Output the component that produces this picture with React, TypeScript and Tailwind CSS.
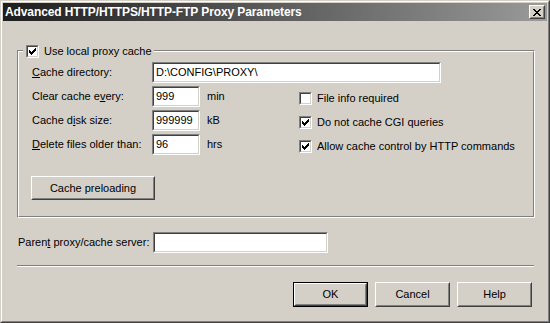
import React from 'react'

const font = "font-['Liberation_Sans',Arial,sans-serif]"

function CheckGlyph() {
  return (
    <svg width="7" height="7" viewBox="0 0 7 7" shapeRendering="crispEdges" className="block">
      <path
        d="M6 0h1v1h-1z M5 1h2v1h-2z M0 2h1v1h-1z M4 2h3v1h-3z M0 3h2v1h-2z M3 3h3v1h-3z M0 4h5v1h-5z M1 5h3v1h-3z M2 6h1v1h-1z"
        fill="#000"
      />
    </svg>
  )
}

function CheckBox({ checked }: { checked: boolean }) {
  return (
    <div className="w-[13px] h-[13px] shrink-0 border border-t-[#808080] border-l-[#808080] border-r-white border-b-white">
      <div className="w-full h-full border border-t-[#404040] border-l-[#404040] border-r-[#d4d0c8] border-b-[#d4d0c8] bg-white flex items-center justify-center">
        {checked && <CheckGlyph />}
      </div>
    </div>
  )
}

function TextBox({ value, className }: { value?: string; className: string }) {
  return (
    <div className={`h-[21px] shrink-0 border border-t-[#808080] border-l-[#808080] border-r-white border-b-white ${className}`}>
      <div className="w-full h-full border border-t-[#404040] border-l-[#404040] border-r-[#d4d0c8] border-b-[#d4d0c8] bg-white flex items-center pl-[2px] leading-none">
        {value}
      </div>
    </div>
  )
}

function Button({ label, isDefault }: { label: string; isDefault?: boolean }) {
  const inner = (
    <div className="w-full h-full border border-t-white border-l-white border-r-[#404040] border-b-[#404040]">
      <div className="w-full h-full border border-t-[#d4d0c8] border-l-[#d4d0c8] border-r-[#808080] border-b-[#808080] flex items-center justify-center">
        {label}
      </div>
    </div>
  )
  if (isDefault) {
    return <div className="w-[75px] h-[25px] border border-black">{inner}</div>
  }
  return <div className="w-[75px] h-[25px]">{inner}</div>
}

function CheckRow({ checked, label }: { checked: boolean; label: string }) {
  return (
    <div className="flex items-center gap-[5px] h-[13px]">
      <CheckBox checked={checked} />
      <span className="leading-none">{label}</span>
    </div>
  )
}

export default function App() {
  return (
    <div className={`w-[550px] h-[323px] bg-[#d4d0c8] border border-t-[#d4d0c8] border-l-[#d4d0c8] border-r-[#404040] border-b-[#404040] text-[11px] text-black ${font}`}>
      <div className="w-full h-full border border-t-white border-l-white border-r-[#808080] border-b-[#808080] p-[1px] flex flex-col">
        {/* Title bar */}
        <div className="h-[18px] shrink-0 flex items-center bg-gradient-to-r from-[#1e1e1e] via-[#5c5c5c] to-[#9a9a9a] pl-[2px] pr-[2px]">
          <span className="text-white font-bold text-[12px] leading-none tracking-[-0.1px]">
            Advanced HTTP/HTTPS/HTTP-FTP Proxy Parameters
          </span>
          <div className="ml-auto w-[16px] h-[14px] border border-t-white border-l-white border-r-[#404040] border-b-[#404040] bg-[#d4d0c8]">
            <div className="w-full h-full border border-t-[#d4d0c8] border-l-[#d4d0c8] border-r-[#808080] border-b-[#808080] flex items-center justify-center">
              <svg width="8" height="7" viewBox="0 0 8 7" shapeRendering="crispEdges" className="block">
                <path
                  d="M0 0h2v1h-2z M6 0h2v1h-2z M1 1h2v1h-2z M5 1h2v1h-2z M2 2h4v1h-4z M3 3h2v1h-2z M2 4h4v1h-4z M1 5h2v1h-2z M5 5h2v1h-2z M0 6h2v1h-2z M6 6h2v1h-2z"
                  fill="#000"
                />
              </svg>
            </div>
          </div>
        </div>

        {/* Group box */}
        <div className="relative ml-[14px] mt-[29px] w-[518px] h-[168px] border border-t-[#808080] border-l-[#808080] border-r-white border-b-white">
          <div className="absolute left-[5px] top-[-6px] flex items-center gap-[5px] bg-[#d4d0c8] pl-[3px] pr-[2px] h-[13px]">
            <CheckBox checked />
            <span className="leading-none">Use local proxy cache</span>
          </div>
          <div className="w-full h-full border border-t-white border-l-white border-r-[#808080] border-b-[#808080] pt-[10px] pl-[12px]">
            <div className="flex items-center h-[21px]">
              <span className="w-[121px] pl-[1px]"><u>C</u>ache directory:</span>
              <TextBox value="D:\CONFIG\PROXY\" className="w-[289px]" />
            </div>
            <div className="flex mt-[3px]">
              <div className="flex flex-col gap-[3px] w-[268px]">
                <div className="flex items-center h-[21px]">
                  <span className="w-[121px] pl-[1px]">Clear cache e<u>v</u>ery:</span>
                  <TextBox value="999" className="w-[48px]" />
                  <span className="ml-[7px]">min</span>
                </div>
                <div className="flex items-center h-[21px]">
                  <span className="w-[121px] pl-[1px]">Cache d<u>i</u>sk size:</span>
                  <TextBox value="999999" className="w-[48px]" />
                  <span className="ml-[7px]">kB</span>
                </div>
                <div className="flex items-center h-[21px]">
                  <span className="w-[121px] pl-[1px]"><u>D</u>elete files older than:</span>
                  <TextBox value="96" className="w-[48px]" />
                  <span className="ml-[7px]">hrs</span>
                </div>
              </div>
              <div className="flex flex-col gap-[11px] pt-[6px]">
                <CheckRow checked={false} label="File info required" />
                <CheckRow checked label="Do not cache CGI queries" />
                <CheckRow checked label="Allow cache control by HTTP commands" />
              </div>
            </div>
            <div className="mt-[21px] w-[124px] h-[24px]">
              <div className="w-full h-full border border-t-white border-l-white border-r-[#404040] border-b-[#404040]">
                <div className="w-full h-full border border-t-[#d4d0c8] border-l-[#d4d0c8] border-r-[#808080] border-b-[#808080] flex items-center justify-center">
                  Cache preloading
                </div>
              </div>
            </div>
          </div>
        </div>

        {/* Parent proxy */}
        <div className="flex items-center h-[21px] mt-[14px] ml-[15px]">
          <span className="w-[135px]">Paren<u>t</u> proxy/cache server:</span>
          <TextBox className="w-[175px]" />
        </div>

        {/* Separator */}
        <div className="ml-[14px] mt-[12px] w-[517px] border-t border-b border-t-[#808080] border-b-white" />

        {/* Buttons */}
        <div className="ml-[14px] mt-[15px] w-[518px] pr-[3px] flex justify-end gap-[7px]">
          <Button label="OK" isDefault />
          <Button label="Cancel" />
          <Button label="Help" />
        </div>
      </div>
    </div>
  )
}
